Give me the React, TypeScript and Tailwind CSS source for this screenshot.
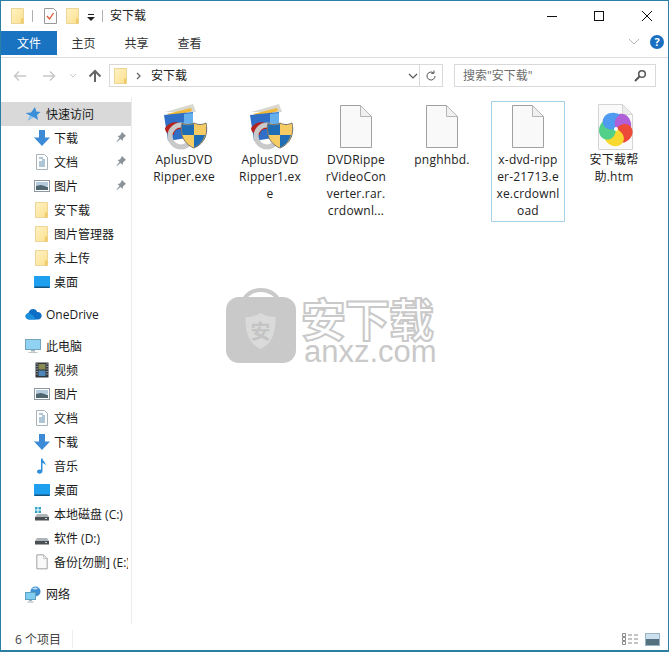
import { ReactNode } from "react";

const font = "font-['Open_Sans','Noto_Sans_CJK_SC',sans-serif]";

function FolderIcon({ size = 16 }: { size?: number }) {
  return (
    <svg width={size} height={size} viewBox="0 0 16 16" className="shrink-0">
      <defs>
        <linearGradient id="fold" x1="0" y1="0" x2="1" y2="1">
          <stop offset="0" stopColor="#fff3c4" />
          <stop offset="1" stopColor="#fbdf8e" />
        </linearGradient>
      </defs>
      <path d="M1.500 .5h12v15h-12z" fill="url(#fold)" stroke="#ecd596" />
      <path d="M11 10.500h2.500v5H11z" fill="#f0cb6a" />
    </svg>
  );
}

function DownloadIcon() {
  return (
    <svg width="16" height="16" viewBox="0 0 16 16" className="shrink-0">
      <path d="M5 0h6v7.500h5L8 16 0 7.500h5z" fill="#3d8bd6" />
    </svg>
  );
}

function DocIcon() {
  return (
    <svg width="16" height="16" viewBox="0 0 16 16" className="shrink-0">
      <path d="M2.500 0.500h8l3 3v12h-11z" fill="#fff" stroke="#a9b3ba" />
      <path d="M5 4h4M8 6h3M5 8h6M5 10h6M5 12h6" stroke="#5f8db0" />
    </svg>
  );
}

function PictureIcon() {
  return (
    <svg width="16" height="16" viewBox="0 0 16 16" className="shrink-0">
      <rect x="0.500" y="2.500" width="15" height="11" fill="#fff" stroke="#8e98a0" />
      <rect x="2" y="4" width="12" height="4" fill="#b3cbdc" />
      <path d="M2 8l5-1 7 2v3H2z" fill="#4f6570" />
    </svg>
  );
}

function DesktopIcon() {
  return (
    <svg width="16" height="16" viewBox="0 0 16 16" className="shrink-0">
      <rect x="0" y="2" width="16" height="12" fill="#1f9ff0" />
      <rect x="0.500" y="12.500" width="15" height="1.500" fill="#14557f" />
    </svg>
  );
}

function PinIcon() {
  return (
    <svg width="12" height="12" viewBox="0 0 12 12">
      <path d="M7 1l4 4-1 .5-2 2-.5 2.500-2-2L2 11l-.5-.5L4.500 7l-2-2L5 4.500l1.500-2.500z" fill="#8b9298" />
    </svg>
  );
}

function DriveIcon({ windows }: { windows?: boolean }) {
  return (
    <svg width="16" height="16" viewBox="0 0 16 16" className="shrink-0">
      {windows && <path d="M1 1h2.500v2.500H1zM4.500 1H7v2.500H4.500zM1 4.500h2.500V7H1zM4.500 4.500H7V7H4.500z" fill="#2ea3c8" />}
      <path d="M3 8h10l2 3H1z" fill="#aeb4b8" />
      <rect x="1" y="11" width="14" height="3.500" fill="#4a4f53" />
      <rect x="11" y="12" width="2" height="1" fill="#cfd4d6" />
    </svg>
  );
}

function BlankIcon({ size = 16 }: { size?: number }) {
  const small = size < 20;
  return (
    <svg width={size} height={size} viewBox="0 0 48 48" className="shrink-0">
      <path d="M8.500 2.500h20l11 11v31h-31z" fill="#f9f9f9" stroke="#a0a0a0" strokeWidth={small ? 3 : 1} />
      <path d="M28.500 2.500v11h11z" fill="#f0f0f0" stroke="#b5b5b5" strokeWidth={small ? 2 : 1} />
    </svg>
  );
}

function PcIcon() {
  return (
    <svg width="16" height="16" viewBox="0 0 16 16" className="shrink-0">
      <rect x="0.500" y="1.500" width="15" height="10" fill="#8fd2f2" stroke="#76a5bb" />
      <path d="M6 12h4v1.500H6z" fill="#9eb0ba" />
      <path d="M3.500 14h9v1h-9z" fill="#bcc6cb" />
    </svg>
  );
}

function VideoIcon() {
  return (
    <svg width="16" height="16" viewBox="0 0 16 16" className="shrink-0">
      <rect x="1.500" y="0.500" width="13" height="15" fill="#31363c" />
      <rect x="4.500" y="2" width="7" height="5.500" fill="#8a8a55" />
      <rect x="4.500" y="8.500" width="7" height="5.500" fill="#4e86b8" />
      <path d="M2.500 2h1M2.500 4.500h1M2.500 7h1M2.500 9.500h1M2.500 12h1M12.500 2h1M12.500 4.500h1M12.500 7h1M12.500 9.500h1M12.500 12h1" stroke="#e8e8e8" />
    </svg>
  );
}

function MusicIcon() {
  return (
    <svg width="16" height="16" viewBox="0 0 16 16" className="shrink-0">
      <path d="M7 0.500h1.500c.3 2.500 3.500 3.500 3 7-.6-1.500-1.800-2.300-3-2.500V13c0 1.700-1.500 2.700-3 2.700S3 14.800 3 13.500s1.800-2.300 4-1.700z" fill="#2f8fd8" />
    </svg>
  );
}

function CloudIcon() {
  return (
    <svg width="17" height="12" viewBox="0 0 17 12" className="shrink-0">
      <path d="M4.500 11.500C2 11.500.5 10 .5 8.300c0-1.600 1.200-2.800 2.800-3C4 2.400 6 1 8 1c2 0 3.500 1.200 4.200 3 2.500-.2 4.500 1.500 4.500 3.800 0 2-1.500 3.700-3.700 3.700z" fill="#0f6fc6" />
      <path d="M4.500 11.500C2 11.500.5 10 .5 8.300c0-1.600 1.200-2.800 3-2.800 3 0 5 2 7.500 6z" fill="#1b8fdc" />
    </svg>
  );
}

function NetworkIcon() {
  return (
    <svg width="17" height="17" viewBox="0 0 17 17" className="shrink-0">
      <circle cx="10.500" cy="5.500" r="5" fill="#3f8fd0" />
      <path d="M7 3c2-2 5-2 6 0-2 .5-4 .5-6 0z" fill="#bfe2f5" />
      <rect x="0.500" y="6.500" width="10" height="7" fill="#7fcdf0" stroke="#5f9fc0" />
      <path d="M4 14h3v1H4zM2.500 15.500h6v1h-6z" fill="#9eb0ba" />
    </svg>
  );
}

function StarIcon() {
  return (
    <svg width="16" height="16" viewBox="0 0 16 16" className="shrink-0">
      <path d="M10 1l1.300 4.500 4.200.5-3.500 3 1 5L8.500 11 3 14.500l2-5L0.500 7l5.500-.5z" fill="#3b8fd8" />
      <path d="M3 14.500l2-5 3.500 1.500z" fill="#8bc6ee" />
    </svg>
  );
}

function AppIcon() {
  return (
    <svg width="48" height="48" viewBox="0 0 48 48">
      <path d="M5 9l28-8 3 8z" fill="#d8d8d0" />
      <path d="M7 11l24-6 1 3-20 6z" fill="#f0b93a" />
      <path d="M4 12l29-3v25L8 38z" fill="#2f6fc8" />
      <path d="M24 11l9-1v24l-9 2z" fill="#63b0ec" />
      <path d="M5 25c4-6 12-7 16-4 3 2 3 5 0 5-5 0-7 2-7 6-4 0-9-2-9-7z" fill="#b5231f" />
      <circle cx="21" cy="33" r="11" fill="none" stroke="#c9c9c9" strokeWidth="5" />
      <path d="M34 20c4 2 8 2 12 0 2 9 0 20-12 25C22 40 20 29 22 20c4 2 8 2 12 0z" fill="#f2c14e" stroke="#6d6d6d" />
      <path d="M34 21v11H22.500c-.5-3-.8-7-.5-11 4 1.500 8 1.500 12 0zM34 32h11c-1.500 5-5 10-11 12.500z" fill="#1f6db5" />
      <path d="M34 21c4 1.500 8 1.500 12 0 .2 4 0 8-1 11H34zM34 32v12.500c-6-2.500-10-7.500-11.500-12.500z" fill="#f4cc63" />
    </svg>
  );
}

function HtmIcon() {
  const cols = ["#b05fd8", "#ee4a3a", "#f9d92f", "#52d08a", "#4f9bf0"];
  return (
    <svg width="48" height="48" viewBox="0 0 48 48">
      <path d="M8.500 1.500h24l10 10v35h-34z" fill="#fafafa" stroke="#d4d4d4" />
      <path d="M32.500 1.500v10h10z" fill="#ececec" stroke="#d4d4d4" />
      {cols.map((c, i) => (
        <path
          key={c}
          d="M26 26c-4-6-3-13 3-15 6-1.500 11 3 12 9 .4 2 .3 3.500-.2 5.500-4-4-10-4-14.800.5z"
          fill={c}
          transform={`rotate(${i * 72} 26 26)`}
        />
      ))}
      <circle cx="26" cy="26" r="2" fill="#fff" />
    </svg>
  );
}

type NavEntry = { label: string; icon: ReactNode; pin?: boolean };

function NavRow({ label, icon, pin, top, active }: NavEntry & { top?: boolean; active?: boolean }) {
  return (
    <div className={`flex items-center h-6 relative ${top ? "pl-[24px]" : "pl-[33px]"} ${active ? "bg-[#d9d9d9]" : ""}`}>
      <div className={`w-4 flex justify-center ${top ? "mr-[5px]" : "mr-[4px]"}`}>{icon}</div>
      <span className="whitespace-nowrap overflow-hidden w-[74px]">{label}</span>
      {pin && (
        <div className="absolute right-[4px] top-[5px]">
          <PinIcon />
        </div>
      )}
    </div>
  );
}

const quick: NavEntry[] = [
  { label: "下载", icon: <DownloadIcon />, pin: true },
  { label: "文档", icon: <DocIcon />, pin: true },
  { label: "图片", icon: <PictureIcon />, pin: true },
  { label: "安下载", icon: <FolderIcon /> },
  { label: "图片管理器", icon: <FolderIcon /> },
  { label: "未上传", icon: <FolderIcon /> },
  { label: "桌面", icon: <DesktopIcon /> },
];

const pc: NavEntry[] = [
  { label: "视频", icon: <VideoIcon /> },
  { label: "图片", icon: <PictureIcon /> },
  { label: "文档", icon: <DocIcon /> },
  { label: "下载", icon: <DownloadIcon /> },
  { label: "音乐", icon: <MusicIcon /> },
  { label: "桌面", icon: <DesktopIcon /> },
  { label: "本地磁盘 (C:)", icon: <DriveIcon windows /> },
  { label: "软件 (D:)", icon: <DriveIcon /> },
  { label: "备份[勿删] (E:)", icon: <BlankIcon /> },
];

const files: { lines: string[]; icon: ReactNode; selected?: boolean }[] = [
  { lines: ["AplusDVD", "Ripper.exe"], icon: <AppIcon /> },
  { lines: ["AplusDVD", "Ripper1.ex", "e"], icon: <AppIcon /> },
  { lines: ["DVDRippe", "rVideoCon", "verter.rar.", "crdownl..."], icon: <BlankIcon size={48} /> },
  { lines: ["pnghhbd."], icon: <BlankIcon size={48} /> },
  { lines: ["x-dvd-ripp", "er-21713.e", "xe.crdownl", "oad"], icon: <BlankIcon size={48} />, selected: true },
  { lines: ["安下载帮", "助.htm"], icon: <HtmIcon /> },
];

export default function App() {
  return (
    <div className={`w-[669px] h-[652px] bg-white flex flex-col border border-[#2d7ea3] border-b-2 overflow-hidden text-[12px] leading-[17px] text-[#1a1a1a] ${font} relative`}>
      {/* title bar */}
      <div className="h-[29px] flex items-center shrink-0">
        <div className="flex items-center pl-[9px]">
          <FolderIcon size={16} />
          <div className="w-px h-3 bg-[#b0b0b0] ml-[6px] mr-[11px]" />
          <svg width="13" height="16" viewBox="0 0 13 16">
            <path d="M.5 .5h9l3 3v12H.5z" fill="#fff" stroke="#9a9a9a" />
            <path d="M3 8l2.500 3 4-6" stroke="#d8552f" strokeWidth="1.300" fill="none" />
          </svg>
          <div className="ml-[8px]">
            <FolderIcon size={16} />
          </div>
          <svg width="8" height="7" viewBox="0 0 8 7" className="ml-[6px] mt-[3px]">
            <path d="M1 0h6v1H1zM0 3h8L4 7z" fill="#222" />
          </svg>
          <div className="w-px h-3 bg-[#b0b0b0] ml-[7px] mr-[7px]" />
          <span className="text-[#222]">安下载</span>
        </div>
        <div className="ml-auto flex items-center text-black">
          <svg width="12" height="12" viewBox="0 0 12 12" className="mr-[35px]">
            <path d="M1 6.500h10" stroke="#111" />
          </svg>
          <svg width="12" height="12" viewBox="0 0 12 12" className="mr-[36px]">
            <rect x="1.500" y="1.500" width="9" height="9" fill="none" stroke="#111" />
          </svg>
          <svg width="12" height="12" viewBox="0 0 12 12" className="mr-[15px]">
            <path d="M1 1l10 10M11 1L1 11" stroke="#111" />
          </svg>
        </div>
      </div>

      {/* ribbon tabs */}
      <div className="h-[28px] flex items-stretch border-b border-[#dcdcdc] shrink-0 relative">
        <div className="w-[56px] h-[24px] mt-[1px] bg-[#1a73c0] text-white flex items-center justify-center">文件</div>
        <div className="w-[53px] flex items-center justify-center pb-[1px] text-[#333]">主页</div>
        <div className="w-[53px] flex items-center justify-center pb-[1px] text-[#333]">共享</div>
        <div className="w-[53px] flex items-center justify-center pb-[1px] text-[#333]">查看</div>
        <div className="ml-auto flex items-center pr-[4px] pb-[3px]">
          <svg width="12" height="8" viewBox="0 0 12 8" className="mr-[10px]">
            <path d="M1 1l5 5 5-5" fill="none" stroke="#b5b5b5" />
          </svg>
          <div className="w-[14px] h-[14px] rounded-full bg-[#1a6fc0] text-white text-[11px] leading-[14px] font-bold text-center">?</div>
        </div>
      </div>

      {/* address row */}
      <div className="h-[39px] flex items-center shrink-0 pb-[4px]">
        <svg width="14" height="12" viewBox="0 0 14 12" className="ml-[12px]">
          <path d="M13 6H2M6 1.500L1.500 6 6 10.500" fill="none" stroke="#c8c8c8" strokeWidth="1.500" />
        </svg>
        <svg width="14" height="12" viewBox="0 0 14 12" className="ml-[15px]">
          <path d="M1 6h11M8 1.500L12.500 6 8 10.500" fill="none" stroke="#c8c8c8" strokeWidth="1.500" />
        </svg>
        <svg width="8" height="6" viewBox="0 0 8 6" className="ml-[13px]">
          <path d="M1 1l3 3 3-3" fill="none" stroke="#c8c8c8" />
        </svg>
        <svg width="14" height="14" viewBox="0 0 14 14" className="ml-[11px]">
          <path d="M7 13V2M1.500 7.500L7 2l5.500 5.500" fill="none" stroke="#666" strokeWidth="2" />
        </svg>
        <div className="ml-[7px] w-[311px] h-[23px] border border-[#d9d9d9] flex items-center">
          <div className="ml-[3px]">
            <FolderIcon size={16} />
          </div>
          <svg width="6" height="8" viewBox="0 0 6 8" className="ml-[7px]">
            <path d="M1 1l3 3-3 3" fill="none" stroke="#666" strokeWidth="1.300" />
          </svg>
          <span className="ml-[9px] text-[#222]">安下载</span>
          <svg width="10" height="6" viewBox="0 0 10 6" className="ml-auto mr-[1px]">
            <path d="M1 1l4 4 4-4" fill="none" stroke="#555" strokeWidth="1.200" />
          </svg>
        </div>
        <div className="w-[23px] h-[23px] border border-l-0 border-[#d9d9d9] flex items-center justify-center">
          <svg width="12" height="12" viewBox="0 0 12 12">
            <path d="M10 6a4 4 0 1 1-1.500-3.100M9 .5v2.800H6.200" fill="none" stroke="#555" />
          </svg>
        </div>
        <div className="ml-[11px] w-[202px] h-[23px] border border-[#d9d9d9] flex items-center px-[8px] text-[#6d6d6d]">
          <span>搜索"安下载"</span>
          <svg width="13" height="13" viewBox="0 0 13 13" className="ml-auto">
            <circle cx="8" cy="5" r="3.300" fill="none" stroke="#555" strokeWidth="1.500" />
            <path d="M5.500 7.500L1 12" stroke="#555" strokeWidth="2" />
          </svg>
        </div>
      </div>

      {/* main */}
      <div className="flex-1 flex min-h-0 relative">
        <div className="w-[131px] border-r border-[#ececec] pt-[5px] shrink-0 overflow-hidden">
          <NavRow label="快速访问" icon={<StarIcon />} top active />
          {quick.map((n) => (
            <NavRow key={n.label} {...n} />
          ))}
          <div className="h-2" />
          <NavRow label="OneDrive" icon={<CloudIcon />} top />
          <div className="h-2" />
          <NavRow label="此电脑" icon={<PcIcon />} top />
          {pc.map((n) => (
            <NavRow key={n.label} {...n} />
          ))}
          <div className="h-2" />
          <NavRow label="网络" icon={<NetworkIcon />} top />
        </div>
        <div className="flex-1 flex items-start gap-x-[12px] pl-[15px] pt-[4px]">
          {files.map((f, i) => (
            <div
              key={i}
              className={`w-[74px] shrink-0 flex flex-col items-center border pb-[2px] tracking-[0.2px] ${f.selected ? "border-[#a5d3e8]" : "border-transparent"}`}
            >
              <div className="h-[48px] flex items-center justify-center mt-[1px]">{f.icon}</div>
              {f.lines.map((l) => (
                <div key={l} className="whitespace-nowrap text-center text-[#222]">
                  {l}
                </div>
              ))}
            </div>
          ))}
        </div>

        {/* watermark */}
        <div className="absolute left-[225px] top-[187px] w-[215px] h-[85px] flex pointer-events-none">
          <svg width="70" height="80" viewBox="0 0 70 80" className="shrink-0">
            <path d="M17 18C22 2 48 2 53 18" fill="none" stroke="#c9c9c9" strokeWidth="4" />
            <rect x="0" y="13" width="70" height="66" rx="13" fill="#c9c9c9" />
            <path d="M34.500 29c5 3 10 4 15 4 0 14-2 26-15 32-13-6-15-18-15-32 5 0 10-1 15-4z" fill="#dadada" />
            <text x="34.500" y="55" textAnchor="middle" fontSize="20" fontWeight="700" fill="#c4c4c4" fontFamily="Noto Sans CJK SC, sans-serif">
              安
            </text>
          </svg>
          <div className="ml-[5px] mt-[17px] flex flex-col font-['Liberation_Sans','Noto_Sans_CJK_SC',sans-serif]">
            <div className="text-[45px] leading-[42px] tracking-[-1px] text-white font-bold [-webkit-text-stroke:2px_#c9c9c9] whitespace-nowrap">
              安下载
            </div>
            <div className="text-[31px] leading-[18px] pl-[3px] text-[#c9c9c9] whitespace-nowrap">anxz.com</div>
          </div>
        </div>
      </div>

      {/* status bar */}
      <div className="h-[26px] shrink-0 flex items-center pl-[14px] pt-[4px] text-[#444]">
        <span className="w-[57px]">6 个项目</span>
        <div className="w-px h-[18px] bg-[#eeeeee]" />
        <div className="ml-auto flex items-center pr-[8px]">
          <svg width="16" height="12" viewBox="0 0 16 12" className="mr-[7px]">
            <path d="M.5 .5h3v3h-3zM.5 4.500h3v3h-3zM.5 8.500h3v3h-3z" fill="none" stroke="#8a8a8a" />
            <path d="M6 2h4M12 2h4M6 6h4M12 6h4M6 10h4M12 10h4" stroke="#8a8a8a" />
          </svg>
          <div className="w-[15px] h-[13px] border border-[#9ab4c6] bg-[#cde0ee] flex items-end">
            <div className="w-full h-[6px] bg-[#55707f]" />
          </div>
        </div>
      </div>
    </div>
  );
}
